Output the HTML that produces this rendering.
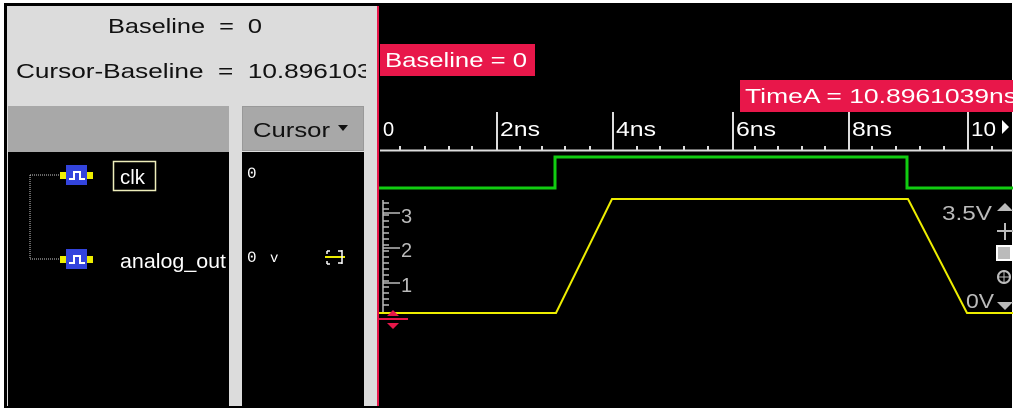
<!DOCTYPE html>
<html><head><style>
body{margin:0;width:1013px;height:411px;overflow:hidden;background:#fff;font-family:"Liberation Sans",sans-serif;position:relative}
.a{position:absolute}
</style></head><body>
<div class="a" style="left:4px;top:3px;width:1008px;height:405px;background:#000"></div>
<div class="a" style="left:7px;top:6px;width:371px;height:400px;background:#dcdcdc"></div>
<div class="a" style="left:8px;top:106px;width:221px;height:46px;background:#a8a8a8"></div>
<div class="a" style="left:242px;top:106px;width:122px;height:45px;background:#a8a8a8;border:1px solid #999;box-sizing:border-box"></div>
<div class="a" style="left:8px;top:152px;width:221px;height:254px;background:#000"></div>
<div class="a" style="left:242px;top:152px;width:122px;height:254px;background:#000"></div>
<svg class="a" style="left:0;top:0" width="1013" height="411" font-family="Liberation Sans">
<g fill="#111" font-size="20">
<text x="108" y="33" textLength="154" lengthAdjust="spacingAndGlyphs">Baseline&#160; = &#160;0</text>
<svg x="0" y="0" width="366" height="100"><text x="16" y="78" textLength="370" lengthAdjust="spacingAndGlyphs">Cursor-Baseline&#160; = &#160;10.8961039</text></svg>
<text x="253" y="137" textLength="77" lengthAdjust="spacingAndGlyphs">Cursor</text>
</g>
<path d="M338 125h10l-5 6z" fill="#111"/>
<g stroke="#ccc" stroke-dasharray="1,1" fill="none"><path d="M30 175H60M30 175V259M30 259H60"/></g>
<g><rect x="60" y="172" width="6" height="7" fill="#ee0"/><rect x="66" y="165" width="21" height="20" fill="#3344dd"/><rect x="87" y="172" width="6" height="7" fill="#ee0"/><path d="M69 179h5v-7h6v7h5" stroke="#fff" stroke-width="2" fill="none"/></g>
<g><rect x="60" y="256" width="6" height="7" fill="#ee0"/><rect x="66" y="249" width="21" height="20" fill="#3344dd"/><rect x="87" y="256" width="6" height="7" fill="#ee0"/><path d="M69 263h5v-7h6v7h5" stroke="#fff" stroke-width="2" fill="none"/></g>
<rect x="113.5" y="161.5" width="42" height="29" fill="none" stroke="#eeeebb" stroke-width="1.5"/>
<g fill="#fff" font-size="20">
<text x="120" y="184" textLength="25" lengthAdjust="spacingAndGlyphs">clk</text>
<text x="120" y="268" textLength="106" lengthAdjust="spacingAndGlyphs">analog_out</text>
</g>
<text x="247" y="178" fill="#fff" font-size="16" font-family="Liberation Mono">0</text>
<text x="247" y="262" fill="#fff" font-size="16" font-family="Liberation Mono">0</text>
<text x="270" y="262" fill="#fff" font-size="14" font-family="Liberation Mono">v</text>
<path d="M325 257h20" stroke="#ee0" stroke-width="2"/>
<path d="M327 251v3M327 261v3M342 250v14M338 251h4M338 263h4M327 251h3M327 264h3" stroke="#fff" stroke-width="1.5"/>
<rect x="377" y="6" width="2" height="400" fill="#e8174a"/>
<rect x="380" y="44" width="155" height="32" fill="#e8174a"/>
<text x="385" y="67" fill="#fff" font-size="20" textLength="142" lengthAdjust="spacingAndGlyphs">Baseline = 0</text>
<rect x="740" y="80" width="273" height="32" fill="#e8174a"/>
<svg x="740" y="80" width="273" height="32"><text x="5" y="23" fill="#fff" font-size="20" textLength="272" lengthAdjust="spacingAndGlyphs">TimeA = 10.8961039ns</text></svg>
<path d="M380 150.5H1013" stroke="#ddd" stroke-width="2"/>
<g stroke="#ddd" stroke-width="2">
<path d="M497 112V150M613 112V150M733 112V150M849 112V150M968 112V150"/>
<path d="M400 146v4M425 146v4M449 146v4M472 146v4M520 146v4M542 146v4M565 146v4M590 146v4M637 146v4M660 146v4M684 146v4M708 146v4M755 146v4M778 146v4M802 146v4M825 146v4M872 146v4M896 146v4M920 146v4M944 146v4M992 146v4"/>
</g>
<g fill="#fff" font-size="20">
<text x="383" y="136">0</text>
<text x="500" y="136" textLength="40" lengthAdjust="spacingAndGlyphs">2ns</text>
<text x="616" y="136" textLength="40" lengthAdjust="spacingAndGlyphs">4ns</text>
<text x="736" y="136" textLength="40" lengthAdjust="spacingAndGlyphs">6ns</text>
<text x="852" y="136" textLength="40" lengthAdjust="spacingAndGlyphs">8ns</text>
<text x="971" y="136" textLength="25" lengthAdjust="spacingAndGlyphs">10</text></g>
<path d="M1002 120l7 7-7 7z" fill="#fff"/>
<path d="M379 188H555V157H907V188H1013" stroke="#1c1" stroke-width="3" fill="none"/>
<path d="M379 313H556L612 199H908L967 313H1013" stroke="#ee0" stroke-width="2" fill="none"/>
<g stroke="#bbb" stroke-width="1.5"><path d="M383 200V312"/>
<path d="M383 203h6M383 209h6M383 215h6M383 221h6M383 227h6M383 233h6M383 239h6M383 245h6M383 251h6M383 257h6M383 263h6M383 269h6M383 275h6M383 281h6M383 287h6M383 293h6M383 299h6M383 305h6M383 213h17M383 248h17M383 283h17"/></g>
<g fill="#bbb" font-size="20"><text x="401" y="223">3</text><text x="401" y="257">2</text><text x="401" y="292">1</text>
<text x="942" y="220" textLength="50" lengthAdjust="spacingAndGlyphs">3.5V</text><text x="966" y="308" textLength="28" lengthAdjust="spacingAndGlyphs">0V</text></g>
<path d="M997 211l8-8 8 8z M997 302l8 8 8-8z" fill="#bbb"/>
<path d="M1005 223v17M997 231h16" stroke="#bbb" stroke-width="2"/>
<rect x="997" y="246" width="14" height="14" fill="#bbb" stroke="#fff" stroke-width="2"/>
<circle cx="1004" cy="277" r="6" fill="none" stroke="#bbb" stroke-width="2"/>
<path d="M1004 271v12M998 277h12" stroke="#bbb"/>
<path d="M377 319H408" stroke="#e8174a" stroke-width="2"/>
<path d="M387 316l6-6 6 6zM387 323l6 6 6-6z" fill="#e8174a"/>
</svg>
</body></html>
